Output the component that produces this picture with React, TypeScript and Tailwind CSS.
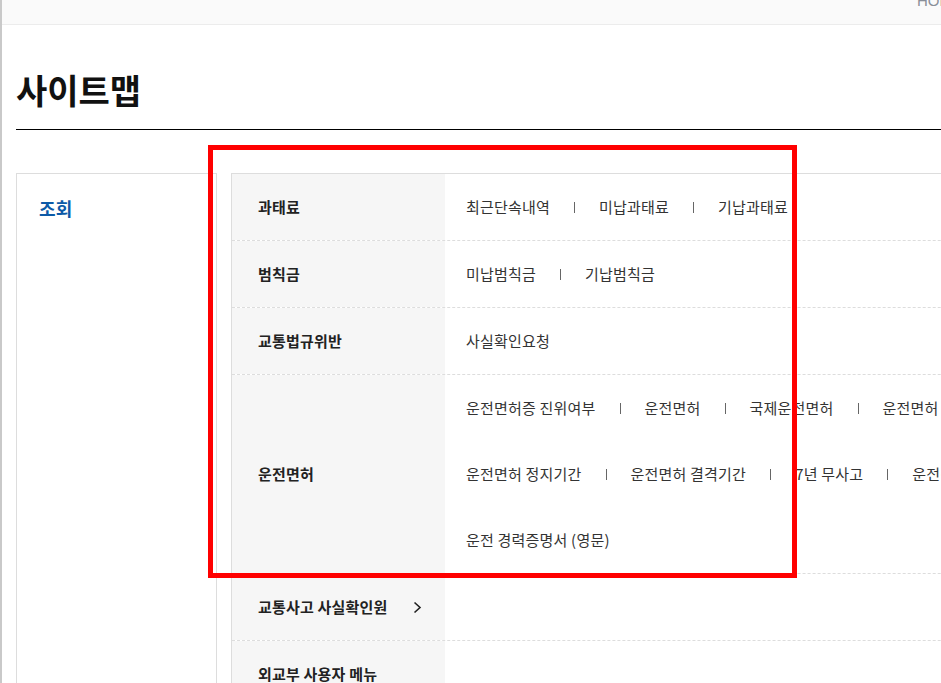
import React from 'react';

type Row = { label: string; lines: string[][]; arrow?: boolean };

const rows: Row[] = [
  { label: '과태료', lines: [['최근단속내역', '미납과태료', '기납과태료']] },
  { label: '범칙금', lines: [['미납범칙금', '기납범칙금']] },
  { label: '교통법규위반', lines: [['사실확인요청']] },
  {
    label: '운전면허',
    lines: [
      ['운전면허증 진위여부', '운전면허', '국제운전면허', '운전면허 적성검사'],
      ['운전면허 정지기간', '운전면허 결격기간', '7년 무사고', '운전경력증명서'],
      ['운전 경력증명서 (영문)'],
    ],
  },
  { label: '교통사고 사실확인원', lines: [[]], arrow: true },
  { label: '외교부 사용자 메뉴', lines: [[]] },
];

function Chevron() {
  return (
    <svg width="9" height="13" viewBox="0 0 9 13" className="ml-[25px] shrink-0">
      <path d="M1.5 1.5 L7 6.5 L1.5 11.5" fill="none" stroke="#222" strokeWidth="1.6" />
    </svg>
  );
}

export default function App() {
  return (
    <div
      className="relative w-[941px] h-[683px] overflow-hidden bg-white text-[#222]"
      style={{ fontFamily: '"Noto Sans CJK KR", "Noto Sans", sans-serif' }}
    >
      {/* left window edge */}
      <div aria-hidden className="absolute left-0 top-0 bottom-0 w-[2px] bg-[#c9c9c9] z-10" />

      {/* ── top bar ── */}
      <div className="h-[25px] bg-[#fafafa] border-b border-[#ececec] flex justify-end overflow-hidden">
        <span
          className="mt-[-9px] mr-[-20px] text-[15px] text-[#8a8f99] leading-[20px] w-[44px]"
          style={{ fontFamily: '"Liberation Sans", Arial, sans-serif' }}
        >
          HOME
        </span>
      </div>

      {/* ── title ── */}
      <div className="ml-[16px] border-b border-black pt-[45px] pb-[19px]">
        <h1 className="text-[34px] font-bold leading-[40px] text-[#111]">사이트맵</h1>
      </div>

      {/* ── body ── */}
      <div className="ml-[16px] mt-[43px] flex gap-[14px]">
        <div className="w-[201px] shrink-0 h-[600px] border border-[#dddddd] pl-[22px] pt-[21px]">
          <span className="text-[18px] font-bold leading-[26px] text-[#0d5aa7] tracking-[0.3px]">조회</span>
        </div>

        <div className="w-[1000px] shrink-0 border-t border-l border-[#dddddd]">
          {rows.map(r => (
            <div key={r.label} className="grid grid-cols-[213px_1fr] border-b border-dashed border-[#dddddd]">
              <div className="bg-[#f6f6f6] flex items-center pl-[26px] text-[15px] font-bold text-[#222] tracking-[0.2px]">
                {r.label}
                {r.arrow && <Chevron />}
              </div>
              <div className="flex flex-col pl-[21px]">
                {r.lines.map((line, i) => (
                  <div
                    key={i}
                    className="h-[66px] flex items-center whitespace-nowrap text-[15px] text-[#333] tracking-[0.2px]"
                  >
                    {line.map((item, j) => (
                      <React.Fragment key={item}>
                        {j > 0 && <span className="mx-[24px] w-px h-[11px] bg-[#666] shrink-0" />}
                        <span>{item}</span>
                      </React.Fragment>
                    ))}
                  </div>
                ))}
              </div>
            </div>
          ))}
        </div>
      </div>

      {/* ── red annotation box ── */}
      <div
        aria-hidden
        className="absolute left-[208px] top-[145px] w-[589px] h-[433px] border-[5px] border-[#ff0000] pointer-events-none z-20"
      />
    </div>
  );
}
